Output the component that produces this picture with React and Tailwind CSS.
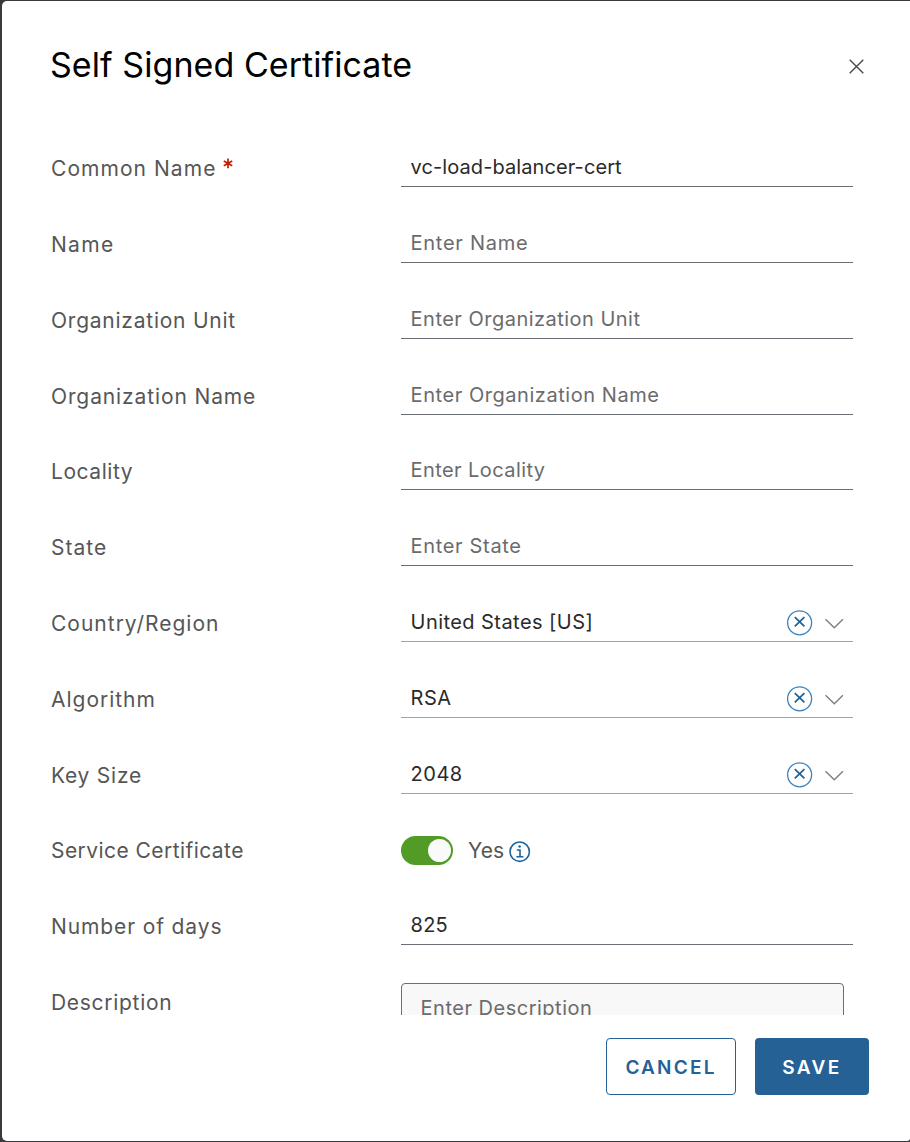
const BLUE = "#1f6499";

function Label({ children, tracking, required }) {
  return (
    <label className="flex w-[350px] shrink-0 text-[21px] leading-[39.3px] whitespace-nowrap text-[#565656]">
      <span className={tracking}>{children}</span>
      {required && (
        <svg className="mt-[9px] ml-[7px]" width="10" height="11" viewBox="0 0 10 11" fill="none" stroke="#c21d00" strokeWidth="1.7" aria-hidden="true">
          <path d="M5 .4v9.8M.8 2.9l8.4 4.8M9.2 2.9L.8 7.7" />
        </svg>
      )}
    </label>
  );
}

function Row({ label, tracking, required, children }) {
  return (
    <div className="flex h-[75.8px] shrink-0 items-start">
      <Label tracking={tracking} required={required}>{label}</Label>
      {children}
    </div>
  );
}

function Field({ value, placeholder, tracking }) {
  return (
    <div className="h-[38px] w-[452px] border-b border-[#6a7075] pl-[9.6px] text-[20px] leading-[37px] whitespace-nowrap">
      <span className={`${tracking} ${value ? "text-[#2a2a2a]" : "text-[#6b6b6b]"}`}>{value || placeholder}</span>
    </div>
  );
}

function Select({ value, tracking }) {
  return (
    <div className="flex h-[38px] w-[452px] items-start border-b border-[#a3a3a3] pl-[9.6px] text-[20px] leading-[37px] whitespace-nowrap text-[#2a2a2a]">
      <span className={`${tracking} flex-1`}>{value}</span>
      <svg className="mt-[5px] mr-[10px]" width="28" height="28" viewBox="0 0 28 28" fill="none" stroke={BLUE} aria-hidden="true">
        <circle cx="13.6" cy="13.8" r="12" stroke="#3f82bd" strokeWidth="1.3" />
        <path d="M8.8 8.2l9.6 9.2M18.4 8.2L8.8 17.4" strokeWidth="1.8" />
      </svg>
      <svg className="mt-[14px] mr-[9px]" width="20" height="12" viewBox="0 0 20 12" fill="none" stroke="#7c8084" strokeWidth="1.4" aria-hidden="true">
        <path d="M1.5 1.2l8.8 8.6 8.6-8.6" />
      </svg>
    </div>
  );
}

function InfoIcon() {
  return (
    <svg className="mt-[10px] ml-[5px]" width="22" height="22" viewBox="0 0 22 22" fill="none" stroke={BLUE} aria-hidden="true">
      <circle cx="10.7" cy="10.7" r="9.7" strokeWidth="1.6" />
      <path d="M7.8 9h3.2v6.7M7.4 15.7h7" strokeWidth="1.6" />
      <circle cx="10.6" cy="5.6" r="1.25" fill={BLUE} stroke="none" />
    </svg>
  );
}

export default function App() {
  return (
    <div className="h-[1142px] w-[910px] overflow-hidden bg-[#3a3a3c] pt-px pb-px pl-[2px] font-['Inter',sans-serif]">
      <div className="flex h-[1140px] w-[908px] flex-col rounded-l-[5px] rounded-br-[3px] bg-white">
        <header className="flex h-[148.15px] shrink-0 items-start justify-between pt-[40px] pr-[45px] pl-[48px]">
          <h1 className="text-[34px] leading-[48px] font-normal tracking-[0.06px] whitespace-nowrap text-black">Self Signed Certificate</h1>
          <svg className="mt-[17px]" width="17" height="17" viewBox="0 0 17 17" fill="none" stroke="#4a4a4a" strokeWidth="1.4" aria-label="Close">
            <path d="M1.7 1.7l13.6 13.6M15.3 1.7L1.7 15.3" />
          </svg>
        </header>

        <main className="flex h-[865.85px] shrink-0 flex-col overflow-hidden pl-[49px]">
          <Row label="Common Name" tracking="tracking-[1.05px]" required>
            <Field value="vc-load-balancer-cert" tracking="tracking-[0.09px]" />
          </Row>
          <Row label="Name" tracking="tracking-[1.3px]">
            <Field placeholder="Enter Name" tracking="tracking-[0.72px]" />
          </Row>
          <Row label="Organization Unit" tracking="tracking-[0.76px]">
            <Field placeholder="Enter Organization Unit" tracking="tracking-[0.48px]" />
          </Row>
          <Row label="Organization Name" tracking="tracking-[0.88px]">
            <Field placeholder="Enter Organization Name" tracking="tracking-[0.55px]" />
          </Row>
          <Row label="Locality" tracking="tracking-[0.55px]">
            <Field placeholder="Enter Locality" tracking="tracking-[0.42px]" />
          </Row>
          <Row label="State" tracking="tracking-[1px]">
            <Field placeholder="Enter State" tracking="tracking-[0.67px]" />
          </Row>
          <Row label="Country/Region" tracking="tracking-[1px]">
            <Select value="United States [US]" tracking="tracking-[0.44px]" />
          </Row>
          <Row label="Algorithm" tracking="tracking-[0.98px]">
            <Select value="RSA" tracking="tracking-[0.5px]" />
          </Row>
          <Row label="Key Size" tracking="tracking-[0.75px]">
            <Select value="2048" tracking="tracking-[0.5px]" />
          </Row>
          <Row label="Service Certificate" tracking="tracking-[0.44px]">
            <div className="mt-[4.5px] flex h-[29px] w-[52px] items-center justify-end rounded-full bg-[#529b27] pr-[2.5px]">
              <div className="size-[23px] rounded-full bg-[#fafafa]" />
            </div>
            <span className="ml-[15px] text-[21px] leading-[39.3px] text-[#565656]">Yes</span>
            <InfoIcon />
          </Row>
          <Row label="Number of days" tracking="tracking-[0.88px]">
            <Field value="825" tracking="tracking-[0.2px]" />
          </Row>
          <Row label="Description" tracking="tracking-[0.7px]">
            <div className="h-[100px] w-[443px] rounded-[4px] border border-[#6a7075] bg-[#f8f8f8] pt-[7px] pl-[18.6px] text-[20px] leading-[35px] whitespace-nowrap text-[#6b6b6b]">
              <span className="tracking-[0.5px]">Enter Description</span>
            </div>
          </Row>
        </main>

        <footer className="flex items-start justify-end gap-[19px] pt-[23px] pr-[41px] text-[19px] font-semibold">
          <button className="flex h-[57px] w-[130px] items-center justify-center rounded-[4px] border border-[#266196] pt-[4px] tracking-[2.2px] text-[#266196]">CANCEL</button>
          <button className="flex h-[57px] w-[114px] items-center justify-center rounded-[4px] bg-[#266196] pt-[4px] tracking-[2.4px] text-white">SAVE</button>
        </footer>
      </div>
    </div>
  );
}
